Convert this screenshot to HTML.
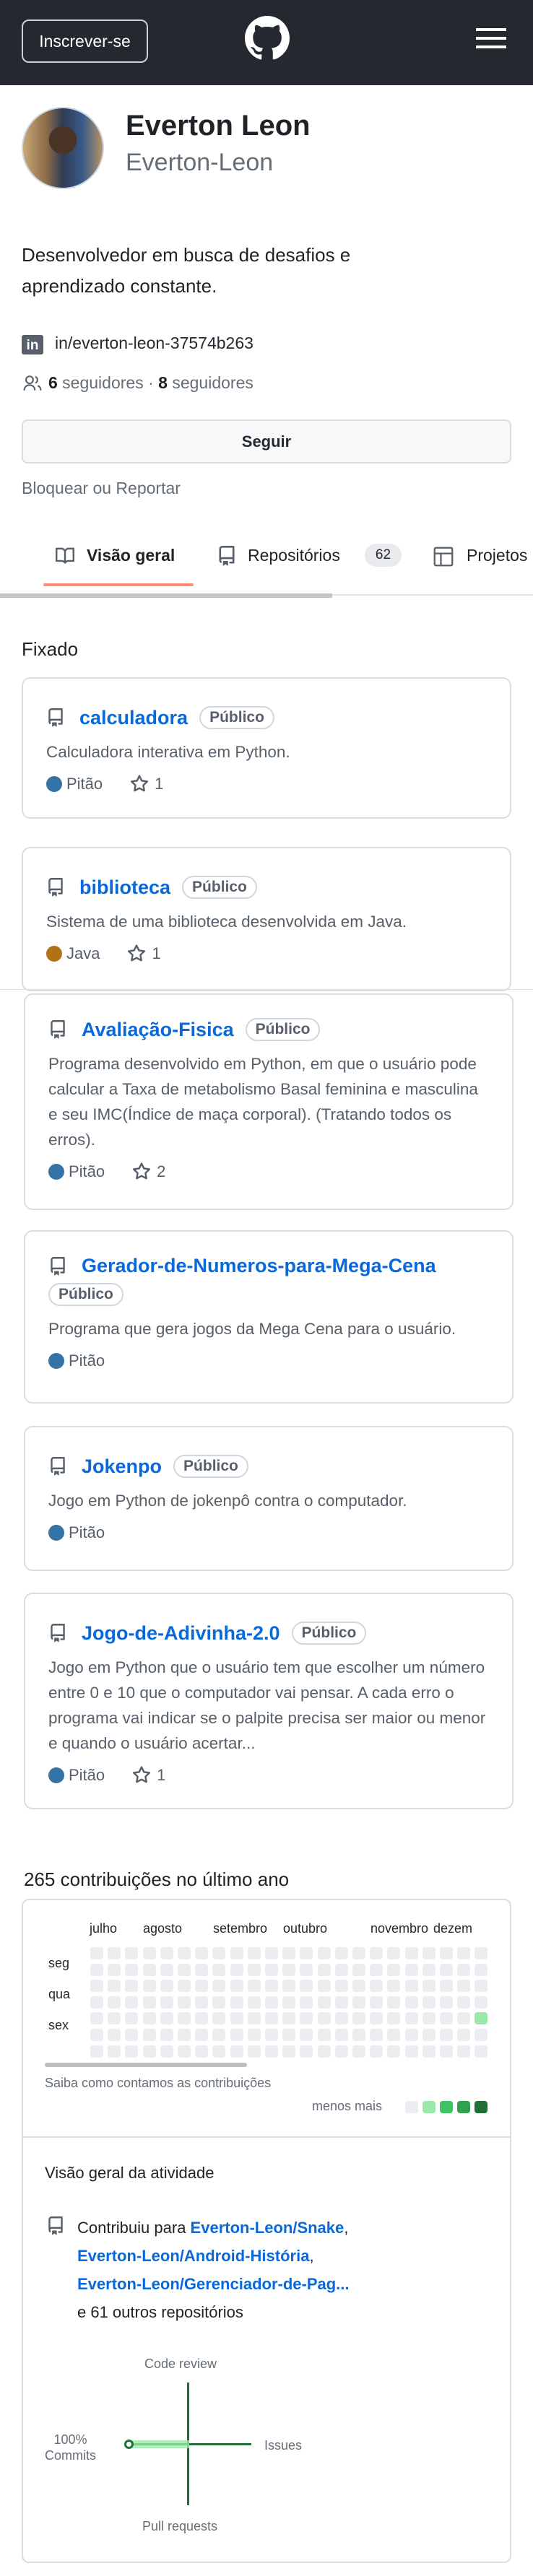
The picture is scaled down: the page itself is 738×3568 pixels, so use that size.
<!DOCTYPE html>
<html><head><meta charset="utf-8">
<style>
*{box-sizing:border-box;margin:0;padding:0}
body{width:738px;height:3568px;position:relative;background:#fff;font-family:"Liberation Sans",Arial,sans-serif;color:#24292f;overflow:hidden}
.a{position:absolute}
.hdr{left:0;top:0;width:738px;height:118px;background:#24292f}
.card{position:absolute;border:2px solid #d8dee4;border-radius:12px;background:#fff;padding:0 20px 0 32px}
.t{display:flex;align-items:center;flex-wrap:wrap;margin-top:38px}
.t svg{width:26px;height:26px;fill:#57606a;margin-right:20px}
.t b{color:#0969da;font-size:27px;margin-right:16px}
.pub{border:2px solid #d0d7de;border-radius:30px;padding:2px 12px;font-size:21px;color:#57606a;font-weight:bold}
.d{font-size:22.5px;line-height:35px;color:#57606a;margin-top:14px;white-space:nowrap}
.m{display:flex;align-items:center;font-size:22px;color:#57606a;margin-top:14px}
.dot{width:22px;height:22px;border-radius:50%;background:#3572a5;margin-right:6px}
.m svg{width:26px;height:26px;fill:#57606a;margin:0 8px 0 38px}
.cell{position:absolute;width:18px;height:17px;border-radius:4px;background:#ebedf0}
.lbl{font-size:18px;color:#24292f;position:absolute}
</style></head><body>
<div class="a hdr"></div>
<div class="a" style="left:30px;top:27px;width:175px;height:60px;border:2px solid #c9d1d9;border-radius:10px;color:#fff;font-size:23px;line-height:56px;text-align:center">Inscrever-se</div>
<svg class="a" style="left:339px;top:22px" width="62" height="62" viewBox="0 0 16 16" fill="#fff"><path d="M8 0c4.42 0 8 3.58 8 8a8.013 8.013 0 0 1-5.45 7.59c-.4.08-.55-.17-.55-.38 0-.27.01-1.13.01-2.2 0-.75-.25-1.23-.54-1.48 1.78-.2 3.65-.88 3.65-3.95 0-.88-.31-1.59-.82-2.15.08-.2.36-1.02-.08-2.12 0 0-.67-.22-2.2.82-.64-.18-1.32-.27-2-.27-.68 0-1.36.09-2 .27-1.53-1.03-2.2-.82-2.2-.82-.44 1.1-.16 1.92-.08 2.12-.51.56-.82 1.28-.82 2.15 0 3.06 1.86 3.75 3.64 3.95-.23.2-.44.55-.51 1.07-.46.21-1.61.55-2.33-.66-.15-.24-.6-.83-1.230-.82-.67.01-.27.38.01.53.34.19.73.9.82 1.13.16.45.68 1.31 2.69.94 0 .67.01 1.3.01 1.49 0 .21-.15.45-.55.38A7.995 7.995 0 0 1 0 8c0-4.42 3.58-8 8-8Z"/></svg>
<div class="a" style="left:659px;top:39px;width:42px;height:4px;background:#fff"></div>
<div class="a" style="left:659px;top:51px;width:42px;height:4px;background:#fff"></div>
<div class="a" style="left:659px;top:63px;width:42px;height:4px;background:#fff"></div>

<div class="a" style="left:30px;top:148px;width:114px;height:114px;border-radius:50%;border:2px solid #d0d7de;background:radial-gradient(circle at 50% 40%,#4a3426 0 22%,transparent 23%),linear-gradient(90deg,#c9a877,#8a6a48 30%,#2f3b55 50%,#3a5a8a 75%,#b89468);"></div>
<div class="a" style="left:174px;top:152px;font-size:40px;font-weight:bold;color:#1f2328">Everton Leon</div>
<div class="a" style="left:174px;top:206px;font-size:34px;color:#656d76">Everton-Leon</div>

<div class="a" style="left:30px;top:332px;font-size:26px;line-height:43px;width:700px;color:#1f2328">Desenvolvedor em busca de desafios e<br>aprendizado constante.</div>
<div class="a" style="left:30px;top:464px;width:30px;height:27px;background:#57606a;border-radius:3px;color:#fff;font-weight:bold;font-size:19px;line-height:29px;text-align:center">in</div>
<div class="a" style="left:76px;top:462px;font-size:23px">in/everton-leon-37574b263</div>
<svg class="a" style="left:30px;top:518px" width="30" height="26" viewBox="0 0 16 16" fill="none" stroke="#57606a" stroke-width="1.3"><circle cx="5.5" cy="5" r="3"/><path d="M1 14c0-3 2-4.5 4.5-4.5S10 11 10 14M10.5 2.3a3 3 0 0 1 0 5.4M12.5 10c1.5.6 2.5 2 2.5 4"/></svg>
<div class="a" style="left:67px;top:517px;font-size:23px;color:#656d76"><b style="color:#1f2328">6</b> seguidores · <b style="color:#1f2328">8</b> seguidores</div>
<div class="a" style="left:30px;top:581px;width:678px;height:61px;border:2px solid #d8dee4;border-radius:8px;background:#f6f8fa;text-align:center;font-weight:bold;font-size:22px;line-height:57px">Seguir</div>
<div class="a" style="left:30px;top:663px;font-size:23px;color:#656d76">Bloquear ou Reportar</div>

<svg class="a" style="left:75px;top:757px" width="30" height="26" viewBox="0 0 16 16" fill="#57606a"><path d="M0 1.75A.75.75 0 0 1 .75 1h4.253c1.227 0 2.317.59 3 1.501A3.743 3.743 0 0 1 11.006 1h4.245a.75.75 0 0 1 .75.75v10.5a.75.75 0 0 1-.75.75h-4.507a2.25 2.25 0 0 0-1.591.659l-.622.621a.75.75 0 0 1-1.06 0l-.622-.621A2.25 2.25 0 0 0 5.258 13H.75a.75.75 0 0 1-.75-.75Zm7.251 10.324.004-5.073-.002-2.253A2.25 2.25 0 0 0 5.003 2.5H1.5v9h3.757a3.75 3.75 0 0 1 1.994.574ZM8.755 4.75l-.004 7.322a3.752 3.752 0 0 1 1.992-.572H14.5v-9h-3.495a2.25 2.25 0 0 0-2.25 2.25Z"/></svg>
<div class="a" style="left:120px;top:756px;font-size:23px;font-weight:bold;color:#1f2328">Visão geral</div>
<svg class="a" style="left:300px;top:756px" width="28" height="28" viewBox="0 0 16 16" fill="#57606a"><use href="#rp"/></svg>
<div class="a" style="left:343px;top:756px;font-size:23px;color:#1f2328">Repositórios</div>
<div class="a" style="left:505px;top:753px;width:51px;height:32px;border-radius:16px;background:#e8eaed;font-size:19px;line-height:32px;text-align:center">62</div>
<svg class="a" style="left:600px;top:757px" width="28" height="28" viewBox="0 0 16 16" fill="none" stroke="#57606a" stroke-width="1.3"><rect x="1" y="1" width="14" height="14" rx="1"/><path d="M1 5.5h14M6 5.5V15"/></svg>
<div class="a" style="left:646px;top:756px;font-size:23px;color:#1f2328">Projetos</div>
<div class="a" style="left:60px;top:808px;width:208px;height:4px;background:#fd8c73;border-radius:2px"></div>
<div class="a" style="left:0;top:823px;width:738px;height:2px;background:#e1e4e8"></div>
<div class="a" style="left:0;top:822px;width:460px;height:6px;background:#c4c4c4"></div>

<svg width="0" height="0" style="position:absolute"><defs>
<path id="rp" d="M2 2.5A2.5 2.5 0 0 1 4.5 0h8.75a.75.75 0 0 1 .75.75v12.5a.75.75 0 0 1-.75.75h-2.5a.75.75 0 0 1 0-1.5h1.75v-2h-8a1 1 0 0 0-.714 1.7.75.75 0 1 1-1.072 1.050A2.495 2.495 0 0 1 2 11.5Zm10.5-1h-8a1 1 0 0 0-1 1v6.708A2.486 2.486 0 0 1 4.5 9h8ZM5 12.25a.25.25 0 0 1 .25-.25h3.5a.25.25 0 0 1 .25.25v3.25a.25.25 0 0 1-.4.2l-1.45-1.087a.249.249 0 0 0-.3 0L5.4 15.7a.25.25 0 0 1-.4-.2Z"/>
<path id="st" d="M8 .25a.75.75 0 0 1 .673.418l1.882 3.815 4.21.612a.75.75 0 0 1 .416 1.279l-3.046 2.97.719 4.192a.751.751 0 0 1-1.088.791L8 12.347l-3.766 1.98a.75.75 0 0 1-1.088-.79l.72-4.194L.818 6.374a.75.75 0 0 1 .416-1.28l4.21-.611L7.327.668A.75.75 0 0 1 8 .25Zm0 2.445L6.615 5.5a.75.75 0 0 1-.564.41l-3.097.45 2.24 2.184a.75.75 0 0 1 .216.664l-.528 3.084 2.769-1.456a.75.75 0 0 1 .698 0l2.77 1.456-.53-3.084a.75.75 0 0 1 .216-.664l2.24-2.183-3.096-.45a.75.75 0 0 1-.564-.41L8 2.694Z"/>
</defs></svg>

<div class="a" style="left:30px;top:884px;font-size:26px;color:#1f2328">Fixado</div>

<div class="card" style="left:30px;top:938px;width:678px;height:196px">
<div class="t"><svg viewBox="0 0 16 16"><use href="#rp"/></svg><b>calculadora</b><span class="pub">Público</span></div>
<div class="d">Calculadora interativa em Python.</div>
<div class="m"><span class="dot"></span>Pitão<svg viewBox="0 0 16 16"><use href="#st"/></svg>1</div>
</div>

<div class="card" style="left:30px;top:1173px;width:678px;height:200px">
<div class="t"><svg viewBox="0 0 16 16"><use href="#rp"/></svg><b>biblioteca</b><span class="pub">Público</span></div>
<div class="d">Sistema de uma biblioteca desenvolvida em Java.</div>
<div class="m"><span class="dot" style="background:#b07219"></span>Java<svg viewBox="0 0 16 16"><use href="#st"/></svg>1</div>
</div>
<div class="a" style="left:0;top:1370px;width:738px;height:1px;background:#d8dee4"></div>

<div class="card" style="left:33px;top:1376px;width:678px;height:300px">
<div class="t" style="margin-top:32px"><svg viewBox="0 0 16 16"><use href="#rp"/></svg><b>Avaliação-Fisica</b><span class="pub">Público</span></div>
<div class="d">Programa desenvolvido em Python, em que o usuário pode<br>calcular a Taxa de metabolismo Basal feminina e masculina<br>e seu IMC(Índice de maça corporal). (Tratando todos os<br>erros).</div>
<div class="m"><span class="dot"></span>Pitão<svg viewBox="0 0 16 16"><use href="#st"/></svg>2</div>
</div>

<div class="card" style="left:33px;top:1704px;width:678px;height:240px">
<div class="t" style="margin-top:32px"><svg viewBox="0 0 16 16"><use href="#rp"/></svg><b>Gerador-de-Numeros-para-Mega-Cena</b><span class="pub" style="margin-top:8px">Público</span></div>
<div class="d">Programa que gera jogos da Mega Cena para o usuário.</div>
<div class="m"><span class="dot"></span>Pitão</div>
</div>

<div class="card" style="left:33px;top:1975px;width:678px;height:201px">
<div class="t" style="margin-top:38px"><svg viewBox="0 0 16 16"><use href="#rp"/></svg><b>Jokenpo</b><span class="pub">Público</span></div>
<div class="d">Jogo em Python de jokenpô contra o computador.</div>
<div class="m"><span class="dot"></span>Pitão</div>
</div>

<div class="card" style="left:33px;top:2206px;width:678px;height:300px">
<div class="t" style="margin-top:38px"><svg viewBox="0 0 16 16"><use href="#rp"/></svg><b>Jogo-de-Adivinha-2.0</b><span class="pub">Público</span></div>
<div class="d">Jogo em Python que o usuário tem que escolher um número<br>entre 0 e 10 que o computador vai pensar. A cada erro o<br>programa vai indicar se o palpite precisa ser maior ou menor<br>e quando o usuário acertar...</div>
<div class="m"><span class="dot"></span>Pitão<svg viewBox="0 0 16 16"><use href="#st"/></svg>1</div>
</div>

<div class="a" style="left:33px;top:2588px;font-size:26px;color:#1f2328">265 contribuições no último ano</div>
<div class="a" style="left:30px;top:2630px;width:678px;height:920px;border:2px solid #d8dee4;border-radius:10px"></div>
<div class="a" style="left:30px;top:2959px;width:678px;height:2px;background:#d8dee4"></div>
<div class="lbl" style="left:124px;top:2661px">julho</div>
<div class="lbl" style="left:198px;top:2661px">agosto</div>
<div class="lbl" style="left:295px;top:2661px">setembro</div>
<div class="lbl" style="left:392px;top:2661px">outubro</div>
<div class="lbl" style="left:513px;top:2661px">novembro</div>
<div class="lbl" style="left:600px;top:2661px">dezem</div>
<div class="lbl" style="left:67px;top:2709px">seg</div>
<div class="lbl" style="left:67px;top:2752px">qua</div>
<div class="lbl" style="left:67px;top:2795px">sex</div>
<div id="grid"></div>
<div class="a" style="left:62px;top:2857px;width:280px;height:6px;background:#bdbdbd;border-radius:3px"></div>
<div class="a" style="left:62px;top:2875px;font-size:18px;color:#656d76">Saiba como contamos as contribuições</div>
<div class="a" style="left:432px;top:2907px;font-size:18px;color:#656d76">menos mais</div>
<div class="cell" style="left:561px;top:2910px"></div>
<div class="cell" style="left:585px;top:2910px;background:#9be9a8"></div>
<div class="cell" style="left:609px;top:2910px;background:#40c463"></div>
<div class="cell" style="left:633px;top:2910px;background:#30a14e"></div>
<div class="cell" style="left:657px;top:2910px;background:#216e39"></div>

<div class="a" style="left:62px;top:2997px;font-size:22px;color:#1f2328">Visão geral da atividade</div>
<svg class="a" style="left:64px;top:3070px" width="26" height="26" viewBox="0 0 16 16" fill="#57606a"><use href="#rp"/></svg>
<div class="a" style="left:107px;top:3066px;font-size:22px;line-height:39px;color:#1f2328">Contribuiu para <b style="color:#0969da">Everton-Leon/Snake</b>,<br><b style="color:#0969da">Everton-Leon/Android-História</b>,<br><b style="color:#0969da">Everton-Leon/Gerenciador-de-Pag...</b><br>e 61 outros repositórios</div>

<div class="a" style="left:200px;top:3264px;font-size:18px;color:#656d76">Code review</div>
<div class="a" style="left:259px;top:3300px;width:3px;height:170px;background:#216e39"></div>
<div class="a" style="left:178px;top:3384px;width:170px;height:3px;background:#216e39"></div>
<div class="a" style="left:178px;top:3380px;width:84px;height:11px;background:#9be9a8;opacity:.8"></div>
<div class="a" style="left:172px;top:3379px;width:13px;height:13px;border:3px solid #216e39;border-radius:50%;background:#fff"></div>
<div class="a" style="left:62px;top:3368px;font-size:18px;color:#656d76;text-align:center;line-height:22px">100%<br>Commits</div>
<div class="a" style="left:366px;top:3377px;font-size:18px;color:#656d76">Issues</div>
<div class="a" style="left:197px;top:3489px;font-size:18px;color:#656d76">Pull requests</div>

<script>
var g=document.getElementById('grid'),h='';
for(var c=0;c<23;c++)for(var r=0;r<7;r++){
var bg=(c==22&&r==4)?'#9be9a8':'#ebedf0';
h+='<div class="cell" style="left:'+(125+c*24.2)+'px;top:'+(2697+r*22.6)+'px;background:'+bg+'"></div>';}
g.innerHTML=h;
</script>
</body></html>
